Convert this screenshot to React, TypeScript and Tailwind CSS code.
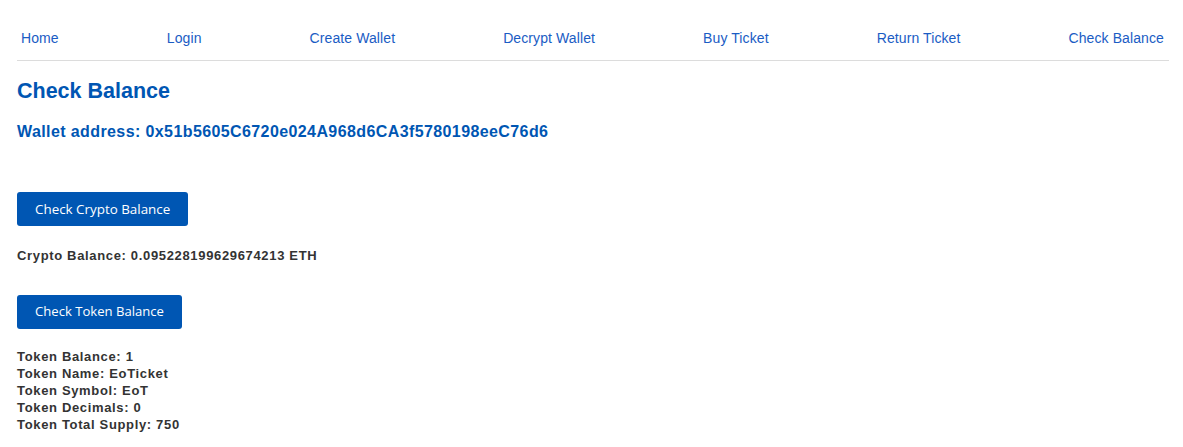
const navItems = ["Home", "Login", "Create Wallet", "Decrypt Wallet", "Buy Ticket", "Return Ticket", "Check Balance"];

export default function App() {
  return (
    <div className="min-h-screen bg-white pl-[17px] pr-[14px] font-['Liberation_Sans',Arial,sans-serif] text-[#333]">
      <nav className="flex justify-between border-b border-[#dcdcdc] pl-1 pr-[5px] pt-[30px] pb-[14px]">
        {navItems.map((item) => (
          <a key={item} href="#" className="text-[14px] leading-[16px] tracking-[0.1px] text-[#1a5cc4]">
            {item}
          </a>
        ))}
      </nav>

      <h1 className="mt-[18px] text-[21.5px] leading-[25px] font-bold text-[#0056b3]">Check Balance</h1>
      <h2 className="mt-[19px] text-[16px] leading-[18px] tracking-[0.4px] font-bold text-[#0056b3]">
        Wallet address: 0x51b5605C6720e024A968d6CA3f5780198eeC76d6
      </h2>

      <button className="mt-[51px] block h-[34px] rounded-[3px] bg-[#0056b3] px-[18px] font-['Open_Sans',sans-serif] text-[13.4px] text-white">
        Check Crypto Balance
      </button>
      <p className="mt-[21px] text-[13px] leading-[17px] tracking-[0.66px] font-bold">
        Crypto Balance: 0.095228199629674213 ETH
      </p>

      <button className="mt-[31px] block h-[34px] rounded-[3px] bg-[#0056b3] px-[18px] font-['Open_Sans',sans-serif] text-[13.1px] text-white">
        Check Token Balance
      </button>
      <div className="mt-[19px] text-[13px] leading-[17px] tracking-[0.66px] font-bold">
        <p>Token Balance: 1</p>
        <p>Token Name: EoTicket</p>
        <p>Token Symbol: EoT</p>
        <p>Token Decimals: 0</p>
        <p>Token Total Supply: 750</p>
      </div>
    </div>
  );
}
